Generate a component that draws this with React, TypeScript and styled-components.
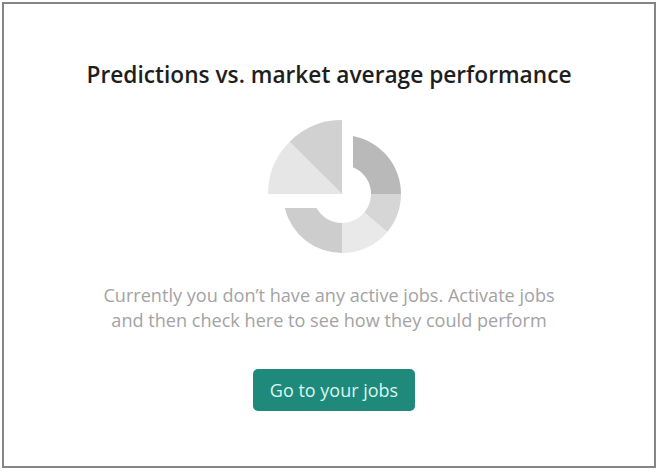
import React from 'react'
import styled, { createGlobalStyle } from 'styled-components'

const GlobalStyle = createGlobalStyle`
  html, body {
    margin: 0;
    padding: 0;
    background: #ffffff;
  }
  body {
    font-family: "Open Sans", Lato, sans-serif;
  }
`

const ChartPlaceholder = () => (
  <svg width="144" height="134" viewBox="0 0 144 134">
    {/* quarter pie, top left */}
    <path d="M85,74 L11,74 A74,74 0 0 1 32.67,21.67 Z" fill="#e6e6e6" />
    <path d="M85,74 L32.67,21.67 A74,74 0 0 1 85,0 Z" fill="#d1d1d1" />
    {/* donut pieces */}
    <path d="M96,16 A59,59 0 0 1 144,74 L114,74 A29,29 0 0 0 96,47.2 Z" fill="#b9b9b9" />
    <path d="M144,74 A59,59 0 0 1 130.2,111.9 L107.2,92.6 A29,29 0 0 0 114,74 Z" fill="#d6d6d6" />
    <path d="M130.2,111.9 A59,59 0 0 1 85,133 L85,103 A29,29 0 0 0 107.2,92.6 Z" fill="#e9e9e9" />
    <path d="M85,133 A59,59 0 0 1 27.7,88 L59.6,88 A29,29 0 0 0 85,103 Z" fill="#cdcdcd" />
  </svg>
)

const App = () => {
  return (
    <>
      <GlobalStyle />
      <Frame>
        <Card>
          <Title>Predictions vs. market average performance</Title>
          <ChartBox>
            <ChartPlaceholder />
          </ChartBox>
          <Message>
            Currently you don’t have any active jobs. Activate jobs
            <br />
            and then check here to see how they could perform
          </Message>
          <JobsButton>Go to your jobs</JobsButton>
        </Card>
      </Frame>
    </>
  )
}

export default App

const Frame = styled.div`
  padding: 2px;
  width: 658px;
  height: 472px;
  box-sizing: border-box;
`

const Card = styled.div`
  width: 654px;
  height: 466px;
  box-sizing: border-box;
  border: 2px solid #858585;
  background: #ffffff;
  display: flex;
  flex-direction: column;
  align-items: center;
  padding-top: 56px;
`

const Title = styled.div`
  font-size: 22.7px;
  font-weight: 600;
  color: #1e1e1e;
  line-height: 30px;
`

const ChartBox = styled.div`
  margin-top: 30px;
  height: 134px;
  display: flex;
`

const Message = styled.div`
  margin-top: 29px;
  font-size: 18.1px;
  line-height: 25px;
  color: #a3a3a3;
  text-align: center;
`

const JobsButton = styled.button`
  margin-top: 36px;
  margin-left: 10px;
  width: 162px;
  height: 42px;
  border: none;
  border-radius: 5px;
  background: #1f8a7b;
  color: #d9f6ef;
  font-family: "Open Sans", Lato, sans-serif;
  font-size: 18px;
  cursor: pointer;
`
